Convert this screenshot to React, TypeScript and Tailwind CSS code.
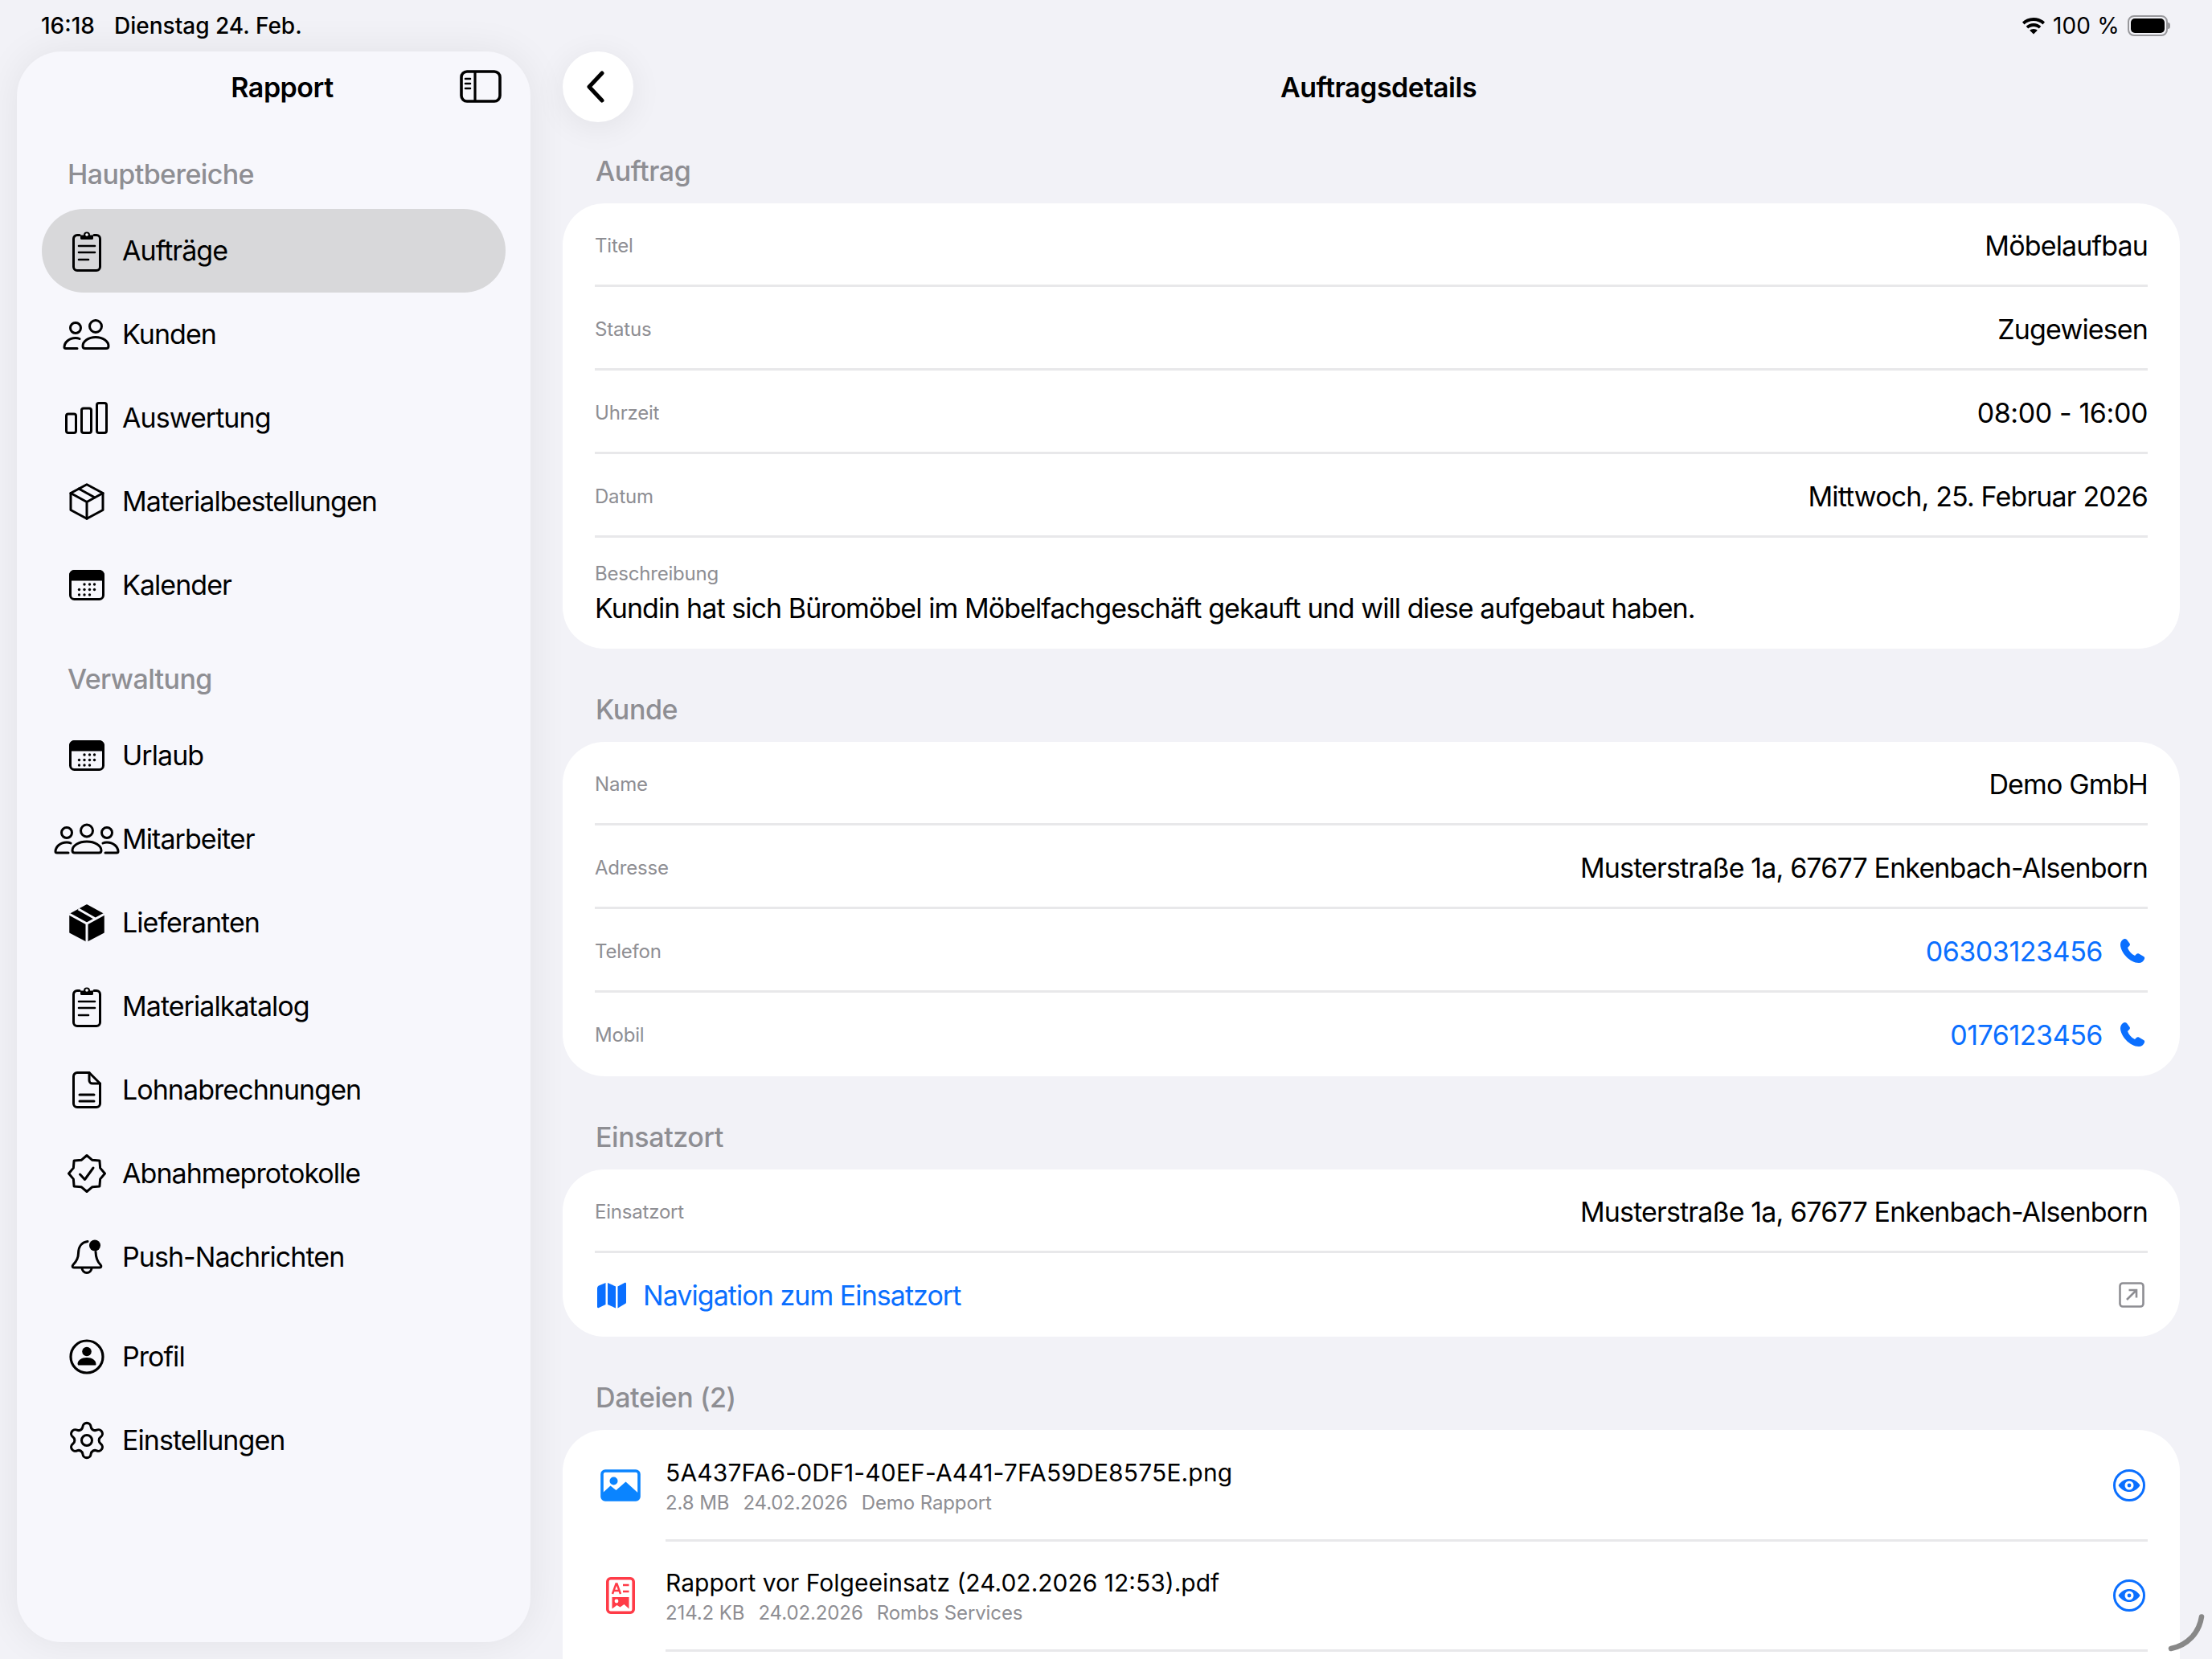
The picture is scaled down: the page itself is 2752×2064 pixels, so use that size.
import React from "react";
import { Settings } from "lucide-react";

const BLUE = "#0a6fff";

function seal(cx: number, cy: number, r1: number, r2: number, n: number) {
  const pts: string[] = [];
  for (let i = 0; i < n * 2; i++) {
    const a = (Math.PI * i) / n - Math.PI / 2;
    const r = i % 2 === 0 ? r1 : r2;
    pts.push(`${(cx + r * Math.cos(a)).toFixed(2)},${(cy + r * Math.sin(a)).toFixed(2)}`);
  }
  return pts.join(" ");
}

const stroke = { fill: "none", stroke: "#000", strokeWidth: 3, strokeLinecap: "round", strokeLinejoin: "round" } as const;

function ClipboardIcon() {
  return (
    <svg width="36" height="52" viewBox="0 0 36 52">
      <path d="M9 6.5H6a4.5 4.5 0 0 0-4.5 4.5v35A4.5 4.5 0 0 0 6 50.5h24a4.5 4.5 0 0 0 4.5-4.5V11A4.5 4.5 0 0 0 30 6.5h-3" {...stroke} />
      <path d="M10 6.5h4a4 4 0 0 1 8 0h4v4a1.5 1.5 0 0 1-1.5 1.5h-13A1.5 1.5 0 0 1 10 10.5z" fill="#000" />
      <circle cx="18" cy="6" r="1.8" fill="#fff" />
      <path d="M8 20h20M8 28h20M8 37h12" {...stroke} strokeWidth={2.6} />
    </svg>
  );
}

function PeopleTwo() {
  return (
    <svg width="60" height="38" viewBox="0 0 60 38">
      <circle cx="16" cy="11" r="6.5" {...stroke} />
      <circle cx="41" cy="9" r="7.5" {...stroke} />
      <path d="M21 24.5c-1.5-.7-3-1-5-1-8 0-14 5.5-14 11.500 0 1 1 1.500 2 1.500h14" {...stroke} />
      <path d="M25 33.500c0-6 7-11 16-11s16 5 16 11c0 2-1 3-3 3H28c-2 0-3-1-3-3z" {...stroke} />
    </svg>
  );
}

function PeopleThree() {
  return (
    <svg width="82" height="40" viewBox="0 0 82 40">
      <circle cx="16" cy="12" r="6.5" {...stroke} />
      <circle cx="41" cy="9.500" r="7.500" {...stroke} />
      <circle cx="66" cy="12" r="6.5" {...stroke} />
      <path d="M21 25c-1.500-.7-3-1-5-1-8 0-14 5.500-14 11.500 0 1 1 1.500 2 1.500h14" {...stroke} />
      <path d="M61 25c1.500-.7 3-1 5-1 8 0 14 5.500 14 11.500 0 1-1 1.500-2 1.500H64" {...stroke} />
      <path d="M23 34c0-6 8-11 18-11s18 5 18 11c0 2-1 3-3 3H26c-2 0-3-1-3-3z" {...stroke} />
    </svg>
  );
}

function BarsIcon() {
  return (
    <svg width="54" height="40" viewBox="0 0 54 40">
      <rect x="1.500" y="15" width="12" height="23.500" rx="2.500" {...stroke} />
      <rect x="20.500" y="8" width="12" height="30.500" rx="2.500" {...stroke} />
      <rect x="39.500" y="1.500" width="12" height="37" rx="2.500" {...stroke} />
    </svg>
  );
}

function BoxOutline() {
  return (
    <svg width="44" height="46" viewBox="0 0 44 46">
      <path d="M22 1.700 42 12.500v21L22 44.300 2 33.500v-21z" {...stroke} />
      <path d="M2 12.500 22 23.500 42 12.500M22 23.500v20.800M12 7 32 18" {...stroke} />
    </svg>
  );
}

function BoxFilled() {
  return (
    <svg width="44" height="47" viewBox="0 0 44 47">
      <path d="M22 1 43 12.500V35L22 46 1 35V12.500z" fill="#000" stroke="#000" strokeWidth="1.500" strokeLinejoin="round" />
      <path d="M0 12 22 24 44 12M22 24v23M11.500 6 32.500 18" fill="none" stroke="#f7f7fc" strokeWidth="3" />
    </svg>
  );
}

function CalendarIcon() {
  const xs = [13, 19.500, 26, 32];
  const rows: [number, number[]][] = [
    [18, [19.500, 26, 32]],
    [24.500, xs],
    [31, [13, 19.500, 26]],
  ];
  return (
    <svg width="44" height="38" viewBox="0 0 44 38">
      <rect x="1.500" y="1.500" width="41" height="35" rx="5" {...stroke} />
      <path d="M1.500 12V6.500a5 5 0 0 1 5-5h31a5 5 0 0 1 5 5V12z" fill="#000" stroke="#000" strokeWidth="3" />
      {rows.map(([y, list]) => list.map((x) => <circle key={`${x}-${y}`} cx={x - 0.5} cy={y} r="1.700" fill="#000" />))}
    </svg>
  );
}

function DocIcon() {
  return (
    <svg width="36" height="46" viewBox="0 0 36 46">
      <path d="M6 1.500h15l13.500 13.500v25A4.500 4.500 0 0 1 30 44.500H6A4.500 4.500 0 0 1 1.500 40V6A4.500 4.500 0 0 1 6 1.500z" {...stroke} />
      <path d="M21 1.500V11a4 4 0 0 0 4 4h9.500M9 29h18M9 37h18" {...stroke} />
    </svg>
  );
}

function BadgeIcon() {
  return (
    <svg width="48" height="48" viewBox="0 0 48 48">
      <polygon points={seal(24, 24, 22.500, 18, 8)} {...stroke} />
      <path d="M15.500 25 21.500 31.500 32 17" {...stroke} />
    </svg>
  );
}

function BellIcon() {
  return (
    <svg width="40" height="44" viewBox="0 0 40 44">
      <path d="M21 2.500C13 3.500 9.500 10 9.500 17c0 7-2.500 10.500-6.500 14.500-1.500 1.700-1 3.500 1 3.500h32c2 0 2.500-1.800 1-3.500-3.500-3.500-5.700-7-6-16" {...stroke} />
      <path d="M14 35.500a6 6 0 0 0 12 0" {...stroke} />
      <circle cx="30" cy="7.500" r="7" fill="#000" />
    </svg>
  );
}

function ProfileIcon() {
  return (
    <svg width="44" height="44" viewBox="0 0 44 44">
      <circle cx="22" cy="22" r="20" {...stroke} strokeWidth={3.200} />
      <circle cx="22" cy="15.500" r="5.800" fill="#000" />
      <path d="M10.500 31.500c0-5.500 5-8.500 11.500-8.500s11.500 3 11.500 8.500c0 .5-.5 1-1 1h-21c-.5 0-.5-.5-.5-1z" fill="#000" />
    </svg>
  );
}

function ToggleIcon() {
  return (
    <svg width="52" height="41" viewBox="0 0 52 41">
      <rect x="2" y="2" width="48" height="37" rx="7" fill="none" stroke="#000" strokeWidth="3.600" />
      <path d="M19 2v37" stroke="#000" strokeWidth="3.200" />
      <path d="M7 11h6M7 17h6M7 23h6" stroke="#000" strokeWidth="2.600" strokeLinecap="round" />
    </svg>
  );
}

function PhoneIcon() {
  return (
    <svg width="32" height="32" viewBox="0 0 32 32" className="shrink-0">
      <path d="M6 1C3 2 1 5 1 8c0 10 12 23 23 23 3 0 6-2 7-5 .500-1.500 0-2.500-1-3l-6-3.500c-1-.500-2-.500-3 .500l-2 2c-5-2.500-7.500-6-9-10l2-2c1-1 1.200-2 .700-3L9 2C8 1 7 .700 6 1z" fill={BLUE} />
    </svg>
  );
}

function MapIcon() {
  return (
    <svg width="36" height="33" viewBox="0 0 36 33" className="shrink-0">
      <path d="M0 8c0-2 1-3 2-3.500L10.500 1v27L2 32c-1 .500-2 0-2-1z" fill={BLUE} />
      <path d="M13 1l10 4.500v27L13 28z" fill={BLUE} />
      <path d="M25.500 5.500 34 1c1-.500 2 0 2 1v23c0 1.500-1 2-2 2.500l-8.500 5z" fill={BLUE} />
    </svg>
  );
}

function ExternalIcon() {
  return (
    <svg width="32" height="32" viewBox="0 0 32 32" className="shrink-0">
      <rect x="1.500" y="1.500" width="29" height="29" rx="3.500" fill="none" stroke="#8e8e93" strokeWidth="2.600" />
      <path d="M10 22 21.500 10.500M12.500 10h9.500v9.500" fill="none" stroke="#8e8e93" strokeWidth="2.600" />
    </svg>
  );
}

function ImageIcon() {
  return (
    <svg width="50" height="40" viewBox="0 0 50 40">
      <rect x="2" y="2" width="46" height="36" rx="4" fill="#fff" stroke="#0a84ff" strokeWidth="3.600" />
      <circle cx="16.500" cy="14.500" r="5" fill="#0a84ff" />
      <path d="M2 30 12.500 20.500 19.500 26 31.500 15.500 48 30.500V38H2z" fill="#0a84ff" />
    </svg>
  );
}

function PdfIcon() {
  return (
    <svg width="36" height="46" viewBox="0 0 36 46">
      <rect x="1.800" y="1.800" width="32.400" height="42.400" rx="4" fill="none" stroke="#ff3b47" strokeWidth="3.600" />
      <path d="M8 21 12.500 8.500h1L18 21M9.500 17h7M21 10h7.500M21 18h7.500" fill="none" stroke="#ff3b47" strokeWidth="2.500" />
      <path d="M7.500 25h21v14.500l-6-5.500-5 3.500-4-2.500-6 4.500z" fill="#ff3b47" />
      <circle cx="13" cy="30" r="2.400" fill="#fff" />
    </svg>
  );
}

function EyeIcon() {
  return (
    <svg width="40" height="40" viewBox="0 0 40 40" className="shrink-0">
      <circle cx="20" cy="20" r="18.500" fill="none" stroke={BLUE} strokeWidth="3" />
      <path d="M6.500 20C10 14.500 15 12 20 12s10 2.500 13.500 8C30 25.500 25 28 20 28S10 25.500 6.500 20z" fill={BLUE} />
      <circle cx="20" cy="20" r="5.500" fill="#fff" />
      <circle cx="20" cy="20" r="2.400" fill={BLUE} />
    </svg>
  );
}

function NavRow({ icon, label, active }: { icon: React.ReactNode; label: string; active?: boolean }) {
  return (
    <div className={`flex h-[104px] items-center rounded-full ${active ? "bg-[#d8d8da]" : ""}`}>
      <div className="ml-[20px] mr-[8px] flex w-[72px] shrink-0 justify-center">
        <div className="shrink-0">{icon}</div>
      </div>
      <span className="text-[34px] leading-none tracking-[-0.95px] text-black">{label}</span>
    </div>
  );
}

function SectionLabel({ children }: { children: React.ReactNode }) {
  return (
    <div className="ml-[32px] mt-[20px] flex h-[88px] items-center text-[34px] font-medium tracking-[-0.6px] text-[#8e8e93]">
      {children}
    </div>
  );
}

function Sidebar() {
  return (
    <aside className="ml-[21px] h-[1979px] w-[639px] shrink-0 rounded-[56px] bg-[#f7f7fc] px-[31px] shadow-[0_0_50px_rgba(0,0,0,0.07)]">
      <div className="relative flex h-[88px] items-center justify-center pl-[21px]">
        <span className="text-[34px] font-semibold tracking-[-0.5px] text-black">Rapport</span>
        <div className="absolute right-[5px] top-[23px]">
          <ToggleIcon />
        </div>
      </div>
      <SectionLabel>Hauptbereiche</SectionLabel>
      <NavRow active icon={<ClipboardIcon />} label="Aufträge" />
      <NavRow icon={<PeopleTwo />} label="Kunden" />
      <NavRow icon={<BarsIcon />} label="Auswertung" />
      <NavRow icon={<BoxOutline />} label="Materialbestellungen" />
      <NavRow icon={<CalendarIcon />} label="Kalender" />
      <SectionLabel>Verwaltung</SectionLabel>
      <NavRow icon={<CalendarIcon />} label="Urlaub" />
      <NavRow icon={<PeopleThree />} label="Mitarbeiter" />
      <NavRow icon={<BoxFilled />} label="Lieferanten" />
      <NavRow icon={<ClipboardIcon />} label="Materialkatalog" />
      <NavRow icon={<DocIcon />} label="Lohnabrechnungen" />
      <NavRow icon={<BadgeIcon />} label="Abnahmeprotokolle" />
      <NavRow icon={<BellIcon />} label="Push-Nachrichten" />
      <div className="h-[20px]" />
      <NavRow icon={<ProfileIcon />} label="Profil" />
      <NavRow icon={<Settings size={52} strokeWidth={1.4} color="#000" />} label="Einstellungen" />
    </aside>
  );
}

function Divider({ inset }: { inset?: boolean }) {
  return <div className={`h-[3px] shrink-0 bg-[#e8e8ea] ${inset ? "ml-[88px]" : ""}`} />;
}

function DetailRow({ label, value, blue, numeric, last }: { label: string; value: string; blue?: boolean; numeric?: boolean; last?: boolean }) {
  return (
    <div className={`flex items-center justify-between pt-[3px] ${last ? "h-[104px] pb-[3px]" : "h-[101px]"}`}>
      <span className="pt-[2px] text-[24px] tracking-[-0.2px] text-[#8e8e93]">{label}</span>
      {blue ? (
        <div className="flex items-center gap-[21px] pr-[3px]">
          <span className="text-[34px] tracking-[-0.45px]" style={{ color: BLUE }}>{value}</span>
          <PhoneIcon />
        </div>
      ) : (
        <span className={`text-[34px] text-black ${numeric ? "tracking-[-0.4px]" : "tracking-[-0.86px]"}`}>{value}</span>
      )}
    </div>
  );
}

function SectionTitle({ children, className }: { children: React.ReactNode; className: string }) {
  return (
    <div className={`flex h-[40px] items-center pl-[41px] text-[34px] font-medium tracking-[-0.4px] text-[#8e8e93] ${className}`}>
      {children}
    </div>
  );
}

function Card({ children, className = "" }: { children: React.ReactNode; className?: string }) {
  return <div className={`rounded-[52px] bg-white px-[40px] ${className}`}>{children}</div>;
}

function FileRow({ icon, name, nameClass, meta }: { icon: React.ReactNode; name: string; nameClass: string; meta: string[] }) {
  return (
    <div className="flex h-[134px] items-center">
      <div className="flex w-[88px] shrink-0 justify-start pl-[7px]">{icon}</div>
      <div className="min-w-0 flex-1 pt-[2px]">
        <div className={`text-[30px] leading-[38px] text-black ${nameClass}`}>{name}</div>
        <div className="mt-[3px] flex gap-[17px] text-[24px] leading-[32px] tracking-[-0.1px] text-[#8e8e93]">
          {meta.map((m) => (
            <span key={m}>{m}</span>
          ))}
        </div>
      </div>
      <div className="pr-[3px]">
        <EyeIcon />
      </div>
    </div>
  );
}

function Main() {
  return (
    <main className="ml-[40px] w-[2012px] shrink-0">
      <div className="relative flex h-[88px] items-center justify-center pl-[18px]">
        <div className="absolute left-0 top-0 flex h-[88px] w-[88px] items-center justify-center rounded-full bg-white pr-[7px] shadow-[0_6px_40px_rgba(0,0,0,0.07)]">
          <svg width="24" height="40" viewBox="0 0 24 40">
            <path d="M20 3 4 20l16 17" fill="none" stroke="#000" strokeWidth="5" strokeLinecap="round" strokeLinejoin="round" />
          </svg>
        </div>
        <span className="text-[34px] font-semibold tracking-[-0.5px] text-black">Auftragsdetails</span>
      </div>

      <SectionTitle className="mt-[40px] mb-[21px]">Auftrag</SectionTitle>
      <Card>
        <DetailRow label="Titel" value="Möbelaufbau" />
        <Divider />
        <DetailRow label="Status" value="Zugewiesen" />
        <Divider />
        <DetailRow label="Uhrzeit" value="08:00 - 16:00" numeric />
        <Divider />
        <DetailRow label="Datum" value="Mittwoch, 25. Februar 2026" />
        <Divider />
        <div className="flex h-[138px] flex-col justify-start pt-[30px]">
          <span className="text-[24px] leading-[30px] tracking-[-0.2px] text-[#8e8e93]">Beschreibung</span>
          <span className="mt-[6px] text-[34px] leading-[44px] tracking-[-0.93px] text-black">
            Kundin hat sich Büromöbel im Möbelfachgeschäft gekauft und will diese aufgebaut haben.
          </span>
        </div>
      </Card>

      <SectionTitle className="mt-[55px] mb-[21px]">Kunde</SectionTitle>
      <Card>
        <DetailRow label="Name" value="Demo GmbH" />
        <Divider />
        <DetailRow label="Adresse" value="Musterstraße 1a, 67677 Enkenbach-Alsenborn" />
        <Divider />
        <DetailRow label="Telefon" value="06303123456" blue />
        <Divider />
        <DetailRow label="Mobil" value="0176123456" blue last />
      </Card>

      <SectionTitle className="mt-[55px] mb-[21px]">Einsatzort</SectionTitle>
      <Card>
        <DetailRow label="Einsatzort" value="Musterstraße 1a, 67677 Enkenbach-Alsenborn" />
        <Divider />
        <div className="flex h-[104px] items-center justify-between">
          <div className="flex items-center gap-[21px] pl-[3px]">
            <MapIcon />
            <span className="text-[34px] tracking-[-0.95px]" style={{ color: BLUE }}>Navigation zum Einsatzort</span>
          </div>
          <div className="pr-[4px]">
            <ExternalIcon />
          </div>
        </div>
      </Card>

      <SectionTitle className="mt-[55px] mb-[21px]">Dateien (2)</SectionTitle>
      <Card className="pb-[200px] pt-[2px]">
        <FileRow icon={<ImageIcon />} name="5A437FA6-0DF1-40EF-A441-7FA59DE8575E.png" nameClass="tracking-[0.15px]" meta={["2.8 MB", "24.02.2026", "Demo Rapport"]} />
        <Divider inset />
        <FileRow icon={<div className="pl-[7px]"><PdfIcon /></div>} name="Rapport vor Folgeeinsatz (24.02.2026 12:53).pdf" nameClass="tracking-[0px]" meta={["214.2 KB", "24.02.2026", "Rombs Services"]} />
        <Divider inset />
      </Card>
    </main>
  );
}

export default function App() {
  return (
    <div className="relative h-[2064px] w-[2752px] overflow-hidden bg-[#f2f2f7] font-['Inter','Liberation_Sans',sans-serif] antialiased">
      <header className="flex h-[64px] items-center justify-between pl-[51px] pr-[52px] text-black">
        <div className="flex gap-[24px] text-[28px] font-medium tracking-[0px]">
          <span>16:18</span>
          <span>Dienstag 24. Feb.</span>
        </div>
        <div className="flex items-center gap-[9px]">
          <svg width="30" height="22" viewBox="0 0 30 22">
            <path d="M15 1C9 1 4.500 3.200 1 6.500l2.500 3C6.500 6.700 10.500 5 15 5s8.500 1.700 11.500 4.500l2.500-3C25.500 3.200 21 1 15 1z" fill="#000" />
            <path d="M15 8c-3.800 0-7 1.400-9.300 3.700l2.500 2.800c1.800-1.600 4.100-2.600 6.800-2.600s5 1 6.800 2.600l2.500-2.800C22 9.400 18.800 8 15 8z" fill="#000" />
            <path d="M15 15c-2 0-3.700.700-4.800 1.800L15 21.500l4.800-4.700C18.700 15.700 17 15 15 15z" fill="#000" />
          </svg>
          <span className="text-[28px] tracking-[0.2px]">100 %</span>
          <div className="ml-[1px] flex items-center">
            <div className="flex h-[26px] w-[50px] items-center justify-center rounded-[8px] border-[2px] border-[#98989c] p-[2px]">
              <div className="h-full w-full rounded-[5px] bg-black" />
            </div>
            <div className="h-[8px] w-[3px] rounded-r-full bg-[#98989c]" />
          </div>
        </div>
      </header>
      <div className="flex">
        <Sidebar />
        <Main />
      </div>
      <svg className="absolute left-[2694px] top-[2006px]" width="50" height="50" viewBox="0 0 50 50">
        <path d="M45 5.500C42 25 28 41 7 45" fill="none" stroke="#888888" strokeWidth="6.500" strokeLinecap="round" />
      </svg>
    </div>
  );
}
